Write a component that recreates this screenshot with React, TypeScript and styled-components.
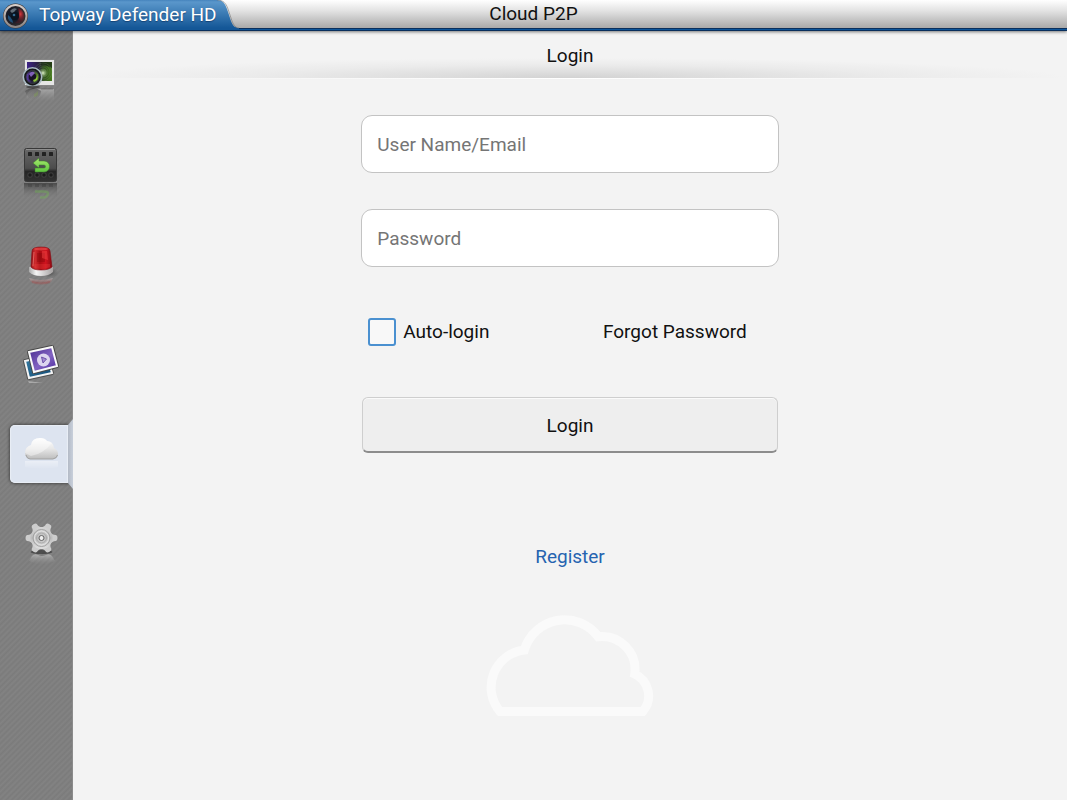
import React, { useState } from "react";
import styled, { createGlobalStyle, css } from "styled-components";

const GlobalStyle = createGlobalStyle`
  * { box-sizing: border-box; }
  body {
    margin: 0;
    background: #f3f3f3;
    color: #111;
    font-family: Roboto, "Noto Sans", sans-serif;
    font-size: 19px;
    line-height: 24px;
  }
  button, input { font: inherit; color: inherit; }
`;

const Page = styled.div`
  display: flex;
  flex-direction: column;
  min-height: 100vh;
`;

const TopBar = styled.header`
  display: grid;
  grid-template-columns: 1fr auto 1fr;
  height: 31px;
  border-bottom: 1px solid #0a2f5c;
  background: linear-gradient(#fff 0, #e2e2e2 11px, #a9a9a9 28px, #0a2f5c 28px, #0a2f5c 29px, #0d569b 29px);
  box-shadow: 0 1px 3px rgba(0, 0, 0, 0.5);
  position: relative;
  z-index: 1;
`;

const Brand = styled.div`
  display: flex;
  height: 30px;
`;

const BrandLabel = styled.div`
  display: flex;
  align-items: center;
  gap: 10px;
  padding-left: 2px;
  color: #fff;
  white-space: nowrap;
  background: linear-gradient(#4584bd 0, #5a97cb 2px, #145797 28px);
  text-shadow: 0 1px 1px rgba(0, 30, 70, 0.5);
`;

const Title = styled.h1`
  margin: 0;
  font-size: 19px;
  font-weight: 400;
  line-height: 28px;
`;

const Body = styled.div`
  display: flex;
  flex: 1;
`;

const Sidebar = styled.nav`
  flex: none;
  width: 73px;
  background: repeating-linear-gradient(135deg, #7b7b7b 0, #838383 2px, #7b7b7b 4px);
  box-shadow: inset -1px 0 0 #8b8b8b;
`;

const NavButton = styled.button<{ $active: boolean }>`
  position: relative;
  display: flex;
  align-items: center;
  justify-content: center;
  width: 100%;
  height: 94px;
  padding: 0 0 0 9px;
  border: 0;
  background: none;
  cursor: pointer;

  svg { position: relative; z-index: 1; display: block; }

  ${(p) =>
    p.$active &&
    css`
      &::before {
        content: "";
        position: absolute;
        inset: 18px 5px 18px 10px;
        border-radius: 5px 0 0 5px;
        background: #dde4f0;
        box-shadow: 0 0 3px 1px rgba(0, 0, 0, 0.4), inset 0 0 1px 1px #e9eef6;
      }
      &::after {
        content: "";
        position: absolute;
        inset: 12px 0 12px 68px;
        clip-path: polygon(0 6px, 100% 0, 100% 100%, 0 calc(100% - 6px));
        background: linear-gradient(90deg, #b3bac6, #c8cfda);
      }
    `}
`;

const Content = styled.main`
  flex: 1;
  display: flex;
  flex-direction: column;
  align-items: center;
`;

const SubHeader = styled.h2`
  width: 100%;
  height: 47px;
  margin: 0;
  padding-top: 13px;
  font-size: 19px;
  font-weight: 400;
  text-align: center;
  background: radial-gradient(ellipse 50% 20px at 50% 100%, #d2d2d2 0, #dedede 30%, #ebebeb 65%, #f3f3f3 100%);
`;

const Highlight = styled.div`
  width: 100%;
  height: 1px;
  background: linear-gradient(90deg, #f3f3f3 10%, #fff 50%, #f3f3f3 90%);
`;

const LoginForm = styled.form`
  display: flex;
  flex-direction: column;
  width: 42%;
  min-width: 300px;
  margin-top: 36px;
`;

const Field = styled.input`
  width: 100%;
  height: 58px;
  margin-bottom: 36px;
  padding: 0 15px;
  border: 1px solid #c3c3c3;
  border-radius: 11px;
  background: #fff;
  outline: 0;
  &::placeholder { color: #757575; opacity: 1; }
`;

const Options = styled.div`
  display: flex;
  align-items: center;
  justify-content: space-between;
  margin: 15px 0 51px;
  padding: 0 32px 0 7px;
`;

const CheckLabel = styled.label`
  display: flex;
  align-items: center;
  gap: 7px;
`;

const Checkbox = styled.input`
  appearance: none;
  width: 28px;
  height: 28px;
  margin: 0;
  border: 2px solid #4a90d0;
  border-radius: 3px;
  background: #f8f8f8;
  &:checked { background: #4a90d0; }
`;

const TextLink = styled.a<{ $accent?: boolean }>`
  color: ${(p) => (p.$accent ? "#2563b0" : "#111")};
  text-decoration: none;
`;

const SubmitButton = styled.button`
  height: 56px;
  margin: 0 1px;
  padding: 2px 0 0;
  border: 1px solid #cecece;
  border-bottom: 2px solid #8c8c8c;
  border-radius: 6px;
  background: #eee;
  box-shadow: inset 0 1px 0 #fafafa;
`;

const RegisterRow = styled.div`
  margin: 92px 0 45px;
`;

function LensLogo() {
  return (
    <svg width="27" height="28" viewBox="0 0 27 28" aria-hidden="true">
      <defs>
        <linearGradient id="ring" x2="0" y2="1">
          <stop stopColor="#d8cfcb" /><stop offset="1" stopColor="#8b8584" />
        </linearGradient>
        <radialGradient id="lens" cx=".4" cy=".45">
          <stop stopColor="#0b1725" /><stop offset=".55" stopColor="#151a27" /><stop offset="1" stopColor="#302b2d" />
        </radialGradient>
        <radialGradient id="flare" cx=".6" cy=".4">
          <stop stopColor="#d8383c" /><stop offset="1" stopColor="#6d1220" stopOpacity=".3" />
        </radialGradient>
      </defs>
      <circle cx="13.5" cy="15" r="12.5" fill="#39322f" />
      <circle cx="13.5" cy="15" r="11" fill="url(#lens)" stroke="url(#ring)" strokeWidth="2" />
      <path d="M16 7a9 9 0 0 1 5 13q-4 3-8 2 6-4 3-15Z" fill="url(#flare)" />
      <path d="M8 10q3-4 7-2-3 2-4 5Z" fill="#96a3ae" opacity=".6" />
      <path d="M6 14q-1 6 5 8 0-4-5-8Z" fill="#24659a" opacity=".7" />
      <circle cx="13" cy="15" r="4" fill="#09131f" />
      <circle cx="12" cy="14" r="1.3" fill="#356a91" />
    </svg>
  );
}

function TabCurve() {
  return (
    <svg width="22" height="30" viewBox="0 0 22 30" aria-hidden="true">
      <defs>
        <linearGradient id="tab" x2="0" y2="30" gradientUnits="userSpaceOnUse">
          <stop stopColor="#4584bd" /><stop offset=".07" stopColor="#5a97cb" /><stop offset=".93" stopColor="#145797" />
        </linearGradient>
      </defs>
      <path d="M0 0C5 0 8 3 10 9l4 12c2 5 4 7 8 7v2H0Z" fill="url(#tab)" />
      <path d="M0 0C6 0 9 3 11 9l4 12c2 5 4 7 7 7" fill="none" stroke="#666" strokeOpacity=".5" />
    </svg>
  );
}

const Icon = ({ children }: { children: React.ReactNode }) => (
  <svg width="44" height="60" viewBox="0 0 44 60" aria-hidden="true">{children}</svg>
);

function LiveIcon() {
  return (
    <Icon>
      <defs>
        <linearGradient id="shot">
          <stop stopColor="#3e2488" /><stop offset=".45" stopColor="#29203f" /><stop offset=".65" stopColor="#2d4c1c" /><stop offset="1" stopColor="#467b1c" />
        </linearGradient>
        <radialGradient id="glow"><stop stopColor="#e3f5d0" /><stop offset="1" stopColor="#7ca95c" stopOpacity="0" /></radialGradient>
        <linearGradient id="liveRef" x2="0" y2="1"><stop stopColor="#d5d5d5" stopOpacity=".45" /><stop offset="1" stopColor="#aaa" stopOpacity="0" /></linearGradient>
        <linearGradient id="lensRef" x2="0" y2="1"><stop stopColor="#222" stopOpacity=".5" /><stop offset="1" stopColor="#555" stopOpacity="0" /></linearGradient>
        <linearGradient id="glass"><stop stopColor="#6744b5" /><stop offset=".45" stopColor="#211c3d" /><stop offset="1" stopColor="#67a31d" /></linearGradient>
      </defs>
      <rect x="5.5" y="11.5" width="30" height="26" rx="1" fill="#e6e6e6" stroke="#686868" strokeOpacity=".6" />
      <rect x="8" y="14" width="25" height="19" fill="url(#shot)" />
      <path d="M22 14h11v6q-6-3-11-2Z" fill="#101810" opacity=".6" />
      <g fill="none" stroke="#91aa8b" strokeWidth=".5" opacity=".4">
        <circle cx="24" cy="24" r="3" /><circle cx="24" cy="24" r="5" /><circle cx="24" cy="24" r="7" /><circle cx="24" cy="24" r="9" />
      </g>
      <circle cx="24" cy="25" r="5" fill="url(#glow)" />
      <circle cx="13.5" cy="29" r="9.2" fill="#151719" stroke="#a9bac3" strokeWidth="1.6" />
      <circle cx="13.5" cy="29" r="6.5" fill="url(#glass)" stroke="#343743" />
      <circle cx="13.5" cy="29" r="3.8" fill="#171224" />
      <path d="M10 26q3-4 6-1l-4 4Z" fill="#9872db" opacity=".8" />
      <path d="M14 32q4-1 4-5 2 5-3 7Z" fill="#a5df3e" opacity=".8" />
      <ellipse cx="14" cy="39" rx="7" ry="1.5" fill="#363636" opacity=".7" />
      <path d="M20 41h15v12H8q-2-10 6-12Z" fill="url(#liveRef)" />
      <path d="M6 43q8-6 16 0-1 8-7 9Q8 50 6 43Z" fill="url(#lensRef)" />
      <path d="M22 41h12" stroke="#555" opacity=".5" />
      <path d="M15 46q4-2 4-4v5q-2 2-4 2Z" fill="#79a637" opacity=".3" />
    </Icon>
  );
}

function PlaybackIcon() {
  const arrow = "M14 21l6-5v3h5a5.500 5.500 0 0 1 0 11h-9v-4h9a1.500 1.500 0 0 0 0-3h-5v3Z";
  return (
    <Icon>
      <defs>
        <linearGradient id="film" x2="0" y2="1"><stop stopColor="#686868" /><stop offset=".6" stopColor="#4c4c4c" /><stop offset=".7" stopColor="#252525" /><stop offset="1" stopColor="#333" /></linearGradient>
        <linearGradient id="green" x2="0" y2="1"><stop stopColor="#a7e96e" /><stop offset="1" stopColor="#5ec43f" /></linearGradient>
        <linearGradient id="filmRef" x2="0" y2="1"><stop stopColor="#333" stopOpacity=".7" /><stop offset="1" stopColor="#777" stopOpacity="0" /></linearGradient>
      </defs>
      <rect x="5.5" y="6.5" width="32" height="33" rx="2" fill="url(#film)" stroke="#383838" />
      <path d="M7 7.5h29" stroke="#8e8e8e" />
      {[9, 16, 23, 30].map((x) => (
        <g key={x}>
          <rect x={x} y="10" width="4" height="4" rx=".5" fill="#222" />
          <rect x={x} y="31" width="4" height="4" rx="1" fill="#1b1b1b" stroke="#555" strokeWidth=".6" />
        </g>
      ))}
      <path d={arrow} fill="url(#green)" stroke="#3a7a2a" strokeWidth=".5" />
      <path d="M5 41h33v15H5Z" fill="url(#filmRef)" />
      {[9, 16, 23, 30].map((x) => <rect key={x} x={x} y="42" width="4" height="3" fill="#333" opacity=".3" />)}
      <path d="M16 49.500h9q4 0 4 2-1 4-5 4h-3" fill="none" stroke="#71b750" strokeWidth="2.500" opacity=".4" />
    </Icon>
  );
}

function AlarmIcon() {
  return (
    <Icon>
      <defs>
        <linearGradient id="red"><stop stopColor="#8b0f15" /><stop offset=".2" stopColor="#cf2c2f" /><stop offset=".42" stopColor="#a90b12" /><stop offset=".7" stopColor="#d0141f" /><stop offset="1" stopColor="#8b0a12" /></linearGradient>
        <linearGradient id="base"><stop stopColor="#a9a9a9" /><stop offset=".3" stopColor="#f5f5f5" /><stop offset="1" stopColor="#a7a3a3" /></linearGradient>
        <radialGradient id="shade"><stop stopColor="#333" stopOpacity=".6" /><stop offset="1" stopColor="#555" stopOpacity="0" /></radialGradient>
        <linearGradient id="alarmRef" x2="0" y2="1"><stop stopColor="#ddd" stopOpacity=".5" /><stop offset="1" stopColor="#b72222" stopOpacity=".1" /></linearGradient>
      </defs>
      <ellipse cx="31" cy="37" rx="9" ry="5" fill="url(#shade)" />
      <path d="M10 31q12-4 24 0v5q-4 4-12 4t-12-4Z" fill="url(#base)" />
      <path d="M13 15q0-4 9-4t9 4l2 16q-3 3-11 3t-10-3Z" fill="url(#red)" stroke="#850c12" strokeWidth=".6" />
      <ellipse cx="22" cy="13" rx="7" ry="1.5" fill="#e64b4b" opacity=".7" />
      <path d="M18 17h8v9h-8Z" fill="#7d050a" opacity=".35" />
      <path d="M23 15h5l1 9-6-2Z" fill="#f04242" opacity=".5" />
      <path d="M15 16l-1 14" stroke="#ff8b83" opacity=".6" />
      <path d="M13 28h18v3q-9 4-18 0Z" fill="#f04340" opacity=".3" />
      <path d="M10 42q12 4 24 0l-2 4q-10 3-20 0Z" fill="url(#alarmRef)" />
      <path d="M13 46q9 3 18 0" fill="none" stroke="#b83333" strokeWidth="2" opacity=".25" />
    </Icon>
  );
}

function MediaIcon() {
  return (
    <Icon>
      <defs>
        <linearGradient id="purple" x2="1" y2="1"><stop stopColor="#45278c" /><stop offset=".55" stopColor="#8263c2" /><stop offset="1" stopColor="#49269b" /></linearGradient>
        <linearGradient id="blue" x2="1" y2="1"><stop stopColor="#367ca4" /><stop offset="1" stopColor="#124c75" /></linearGradient>
      </defs>
      <path d="M6 31l22-5 5 17-23 5Z" fill="url(#blue)" stroke="#505050" strokeWidth="4" strokeLinejoin="round" />
      <path d="M6 31l22-5 5 17-23 5Z" fill="url(#blue)" stroke="#f4f4f4" strokeWidth="2" />
      <path d="M10 22l23-5 5 19-23 6Z" fill="url(#purple)" stroke="#474747" strokeWidth="4" strokeLinejoin="round" />
      <path d="M10 22l23-5 5 19-23 6Z" fill="url(#purple)" stroke="#fafafa" strokeWidth="2" />
      <circle cx="24.500" cy="30" r="6.500" fill="#ddd5ef" />
      <path d="M22.500 27l5 2-3.500 4Z" fill="#a58bd3" stroke="#5b3d9c" strokeWidth=".8" />
      <path d="M9 51l15 2-14 0Z" fill="#ddd" opacity=".45" />
    </Icon>
  );
}

function CloudIcon() {
  return (
    <Icon>
      <defs>
        <linearGradient id="cloud" x2="0" y2="1"><stop stopColor="#fff" /><stop offset=".5" stopColor="#e8e8e8" /><stop offset="1" stopColor="#bdbdbd" /></linearGradient>
        <linearGradient id="cloudRef" x2="0" y2="1"><stop stopColor="#fff" stopOpacity=".4" /><stop offset="1" stopColor="#fff" stopOpacity="0" /></linearGradient>
      </defs>
      <path d="M10 35q-4-2-4-6 0-6 6-8 1-7 9-7 5 0 7 3 6 0 7 7 4 2 4 6 0 4-4 5Z" fill="url(#cloud)" />
      <path d="M7 31q1 4 4 4h23q4-1 4.500-4" fill="none" stroke="#a2a2a2" />
      <path d="M12 32q12-2 21-13l-5-2q-2-3-7-3-8 0-9 7-6 2-6 8Z" fill="#fff" opacity=".4" />
      <path d="M6 37h33v6q-16 4-33 0Z" fill="url(#cloudRef)" />
    </Icon>
  );
}

function SettingsIcon() {
  return (
    <Icon>
      <defs>
        <linearGradient id="steel" x1="0" y1="4" x2="0" y2="36" gradientUnits="userSpaceOnUse">
          <stop stopColor="#e0e0e0" /><stop offset=".5" stopColor="#bcbcbc" /><stop offset="1" stopColor="#f0f0f0" />
        </linearGradient>
        <linearGradient id="gearRef" x2="0" y2="1"><stop stopColor="#e3e3e3" stopOpacity=".5" /><stop offset="1" stopColor="#999" stopOpacity="0" /></linearGradient>
      </defs>
      <ellipse cx="22.500" cy="34" rx="11" ry="2" fill="#333" opacity=".65" />
      <g fill="#cdcdcd">
        {[0, 60, 120, 180, 240, 300].map((a) => (
          <path key={a} transform={`rotate(${a} 22.5 20)`} d="M30 12.500Q32.500 17 37 17Q38.500 17.500 38.500 20T37 23Q32.500 23 30 27.500Z" />
        ))}
      </g>
      <circle cx="22.500" cy="20" r="11" fill="url(#steel)" />
      <g fill="none">
        <circle cx="22.500" cy="20" r="8.500" stroke="#a3a3a3" />
        <circle cx="22.500" cy="20" r="7" stroke="#e2e2e2" />
        <circle cx="22.500" cy="20" r="5" stroke="#aaa" />
        <circle cx="22.500" cy="20" r="2.500" fill="#eee" stroke="#666" />
      </g>
      <path d="M13 38q3-3 6-1 4 2 8 0 3-2 6 1l3 5q-13 7-26 0Z" fill="url(#gearRef)" />
    </Icon>
  );
}

const sections = [
  { name: "Live view", Glyph: LiveIcon },
  { name: "Playback", Glyph: PlaybackIcon },
  { name: "Alarm", Glyph: AlarmIcon },
  { name: "Media", Glyph: MediaIcon },
  { name: "Cloud P2P", Glyph: CloudIcon },
  { name: "Settings", Glyph: SettingsIcon },
];

export default function App() {
  const [active, setActive] = useState("Cloud P2P");
  return (
    <Page>
      <GlobalStyle />
      <TopBar>
        <Brand>
          <BrandLabel><LensLogo />Topway Defender HD</BrandLabel>
          <TabCurve />
        </Brand>
        <Title>Cloud P2P</Title>
      </TopBar>
      <Body>
        <Sidebar>
          {sections.map(({ name, Glyph }) => (
            <NavButton key={name} type="button" aria-label={name} $active={name === active} onClick={() => setActive(name)}>
              <Glyph />
            </NavButton>
          ))}
        </Sidebar>
        <Content>
          <SubHeader>Login</SubHeader>
          <Highlight />
          <LoginForm onSubmit={(e) => e.preventDefault()}>
            <Field type="text" placeholder="User Name/Email" aria-label="User Name/Email" />
            <Field type="password" placeholder="Password" aria-label="Password" />
            <Options>
              <CheckLabel><Checkbox type="checkbox" />Auto-login</CheckLabel>
              <TextLink href="#forgot">Forgot Password</TextLink>
            </Options>
            <SubmitButton type="submit">Login</SubmitButton>
          </LoginForm>
          <RegisterRow><TextLink href="#register" $accent>Register</TextLink></RegisterRow>
          <svg width="168" height="103" viewBox="0 0 168 103" aria-hidden="true">
            <path
              d="M14 97.500A37.500 37.500 0 0 1 38.300 36A42 42 0 0 1 112.300 22.700A33 33 0 0 1 148.700 60A24 24 0 0 1 156.700 97.500Z"
              fill="none" stroke="#fafafa" strokeWidth="9"
            />
          </svg>
        </Content>
      </Body>
    </Page>
  );
}
